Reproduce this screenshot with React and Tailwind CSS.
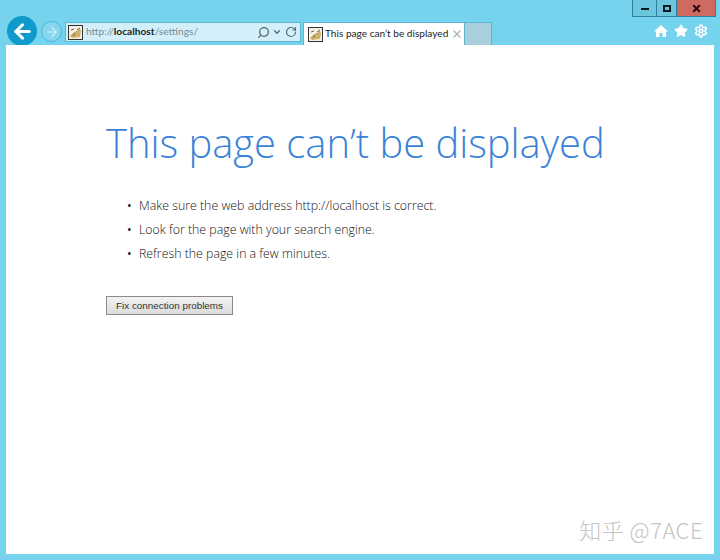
import { ArrowLeft, ArrowRight, Search, RotateCw, X, Star, Settings, ChevronDown } from "lucide-react";

// broken-page favicon used in the address bar and the tab
function PageIcon() {
  return (
    <svg width="15" height="15" viewBox="0 0 15 15" className="shrink-0">
      <rect x="0.5" y="0.5" width="14" height="14" fill="#f4f1e4" stroke="#333" />
      <path d="M2 11 L6 7 L8 9 L11 3 L13 6 L12 12 L4 13 Z" fill="#d2b066" />
      <path d="M9 5 L12 3 M5 11 L9 6 M3 5 L6 4" stroke="#7a6a3e" strokeWidth="1" />
    </svg>
  );
}

function Topbar() {
  return (
    <div className="h-[45px] flex items-start pt-[16px] pl-[7px] pr-[12px]">
      <div className="w-[30px] h-[30px] rounded-full bg-[#0f9acb] flex items-center justify-center shrink-0">
        <ArrowLeft size={23} strokeWidth={3.2} className="text-white" />
      </div>
      <div className="w-[21px] h-[21px] mt-[5px] ml-[4px] rounded-full border border-[#4fb3d6] bg-[#86d6ee] flex items-center justify-center shrink-0">
        <ArrowRight size={14} strokeWidth={2} className="text-[#d4f1fa]" />
      </div>
      <div className="w-[236px] h-[20px] mt-[6px] ml-[3px] bg-[#d3f0fa] border border-[#5fb6d0] flex items-center pl-[2px] pr-[3px] shrink-0">
        <PageIcon />
        <span className="ml-[3px] text-[10.2px] text-[#7b8b92] font-['Lato',sans-serif]">
          http://<span className="text-[#222] font-bold">localhost</span>/settings/
        </span>
        <Search size={13} strokeWidth={2.4} className="ml-auto text-[#5c6a70] -scale-x-100" />
        <ChevronDown size={10} strokeWidth={3} className="ml-[2px] text-[#5c6a70]" />
        <RotateCw size={12} strokeWidth={2.4} className="ml-[3px] text-[#5c6a70]" />
      </div>
      <div className="w-[162px] h-[23px] mt-[6px] ml-[2px] bg-white border border-[#62b4cc] border-b-0 flex items-center pl-[4px] pr-[1px] shrink-0">
        <PageIcon />
        <span className="ml-[2px] text-[10.1px] text-[#222] font-['Lato',sans-serif] whitespace-nowrap">
          This page can’t be displayed
        </span>
        <X size={12} strokeWidth={2.4} className="ml-auto shrink-0 text-[#a9b2b6]" />
      </div>
      <div className="w-[27px] h-[23px] mt-[6px] bg-[#a9cfdd] border border-[#62b4cc] border-l-0 border-b-0 shrink-0"></div>
      <div className="ml-auto mt-[8px] flex items-center gap-[6px] text-white">
        <svg width="14" height="14" viewBox="0 0 14 14" fill="white">
          <path d="M7 1 L14 7.5 H12 V13 H8.5 V9 H5.5 V13 H2 V7.5 H0 Z" />
        </svg>
        <Star size={14} strokeWidth={2} fill="white" />
        <Settings size={14} strokeWidth={2.8} />
      </div>
    </div>
  );
}

function WindowControls() {
  return (
    <div className="absolute top-0 left-[632px] h-[17px] flex border border-t-0 border-[#2f7f9c]">
      <div className="w-[24px] bg-[#6cc6de] border-r border-[#2f7f9c] flex items-center justify-center">
        <div className="w-[8px] h-[2px] bg-[#0c1a22] mt-[2px]"></div>
      </div>
      <div className="w-[20px] bg-[#6cc6de] border-r border-[#2f7f9c] flex items-center justify-center">
        <div className="w-[8px] h-[7px] border-2 border-[#0c1a22]"></div>
      </div>
      <div className="w-[38px] bg-[#cf6a60] flex items-center justify-center">
        <X size={11} strokeWidth={4.5} className="text-[#2a1010]" />
      </div>
    </div>
  );
}

export default function App() {
  return (
    <div className="relative w-[720px] h-[560px] overflow-hidden bg-[#76d3ee] flex flex-col">
      <WindowControls />
      <Topbar />
      <main className="relative mx-[6px] mb-[6px] flex-1 bg-white pl-[100px] pt-[73px]">
        <h1 className="font-['Open_Sans',sans-serif] font-light text-[39.9px] leading-[50px] text-[#3a83d6] whitespace-nowrap">
          This page can’t be displayed
        </h1>
        <ul className="mt-[29px] ml-[21px] flex flex-col gap-[6px] font-['Open_Sans',sans-serif] font-light text-[12.35px] leading-[18px] text-[#111]">
          <li className="flex"><span className="w-[12px] font-normal">•</span>Make sure the web address http://localhost is correct.</li>
          <li className="flex"><span className="w-[12px] font-normal">•</span>Look for the page with your search engine.</li>
          <li className="flex"><span className="w-[12px] font-normal">•</span>Refresh the page in a few minutes.</li>
        </ul>
        <button className="mt-[33px] w-[127px] h-[19px] border border-[#8a8a8a] bg-gradient-to-b from-[#f2f2f2] to-[#dcdcdc] font-['Liberation_Sans',sans-serif] text-[9.9px] leading-none text-[#333]">
          Fix connection problems
        </button>
        <div className="absolute right-[11px] bottom-[12px] font-['Noto_Sans_CJK_SC','Liberation_Sans',sans-serif] font-light text-[22px] leading-[26px] tracking-[0.5px] text-[#c4c4c4]">
          知乎 @7ACE
        </div>
      </main>
    </div>
  );
}
